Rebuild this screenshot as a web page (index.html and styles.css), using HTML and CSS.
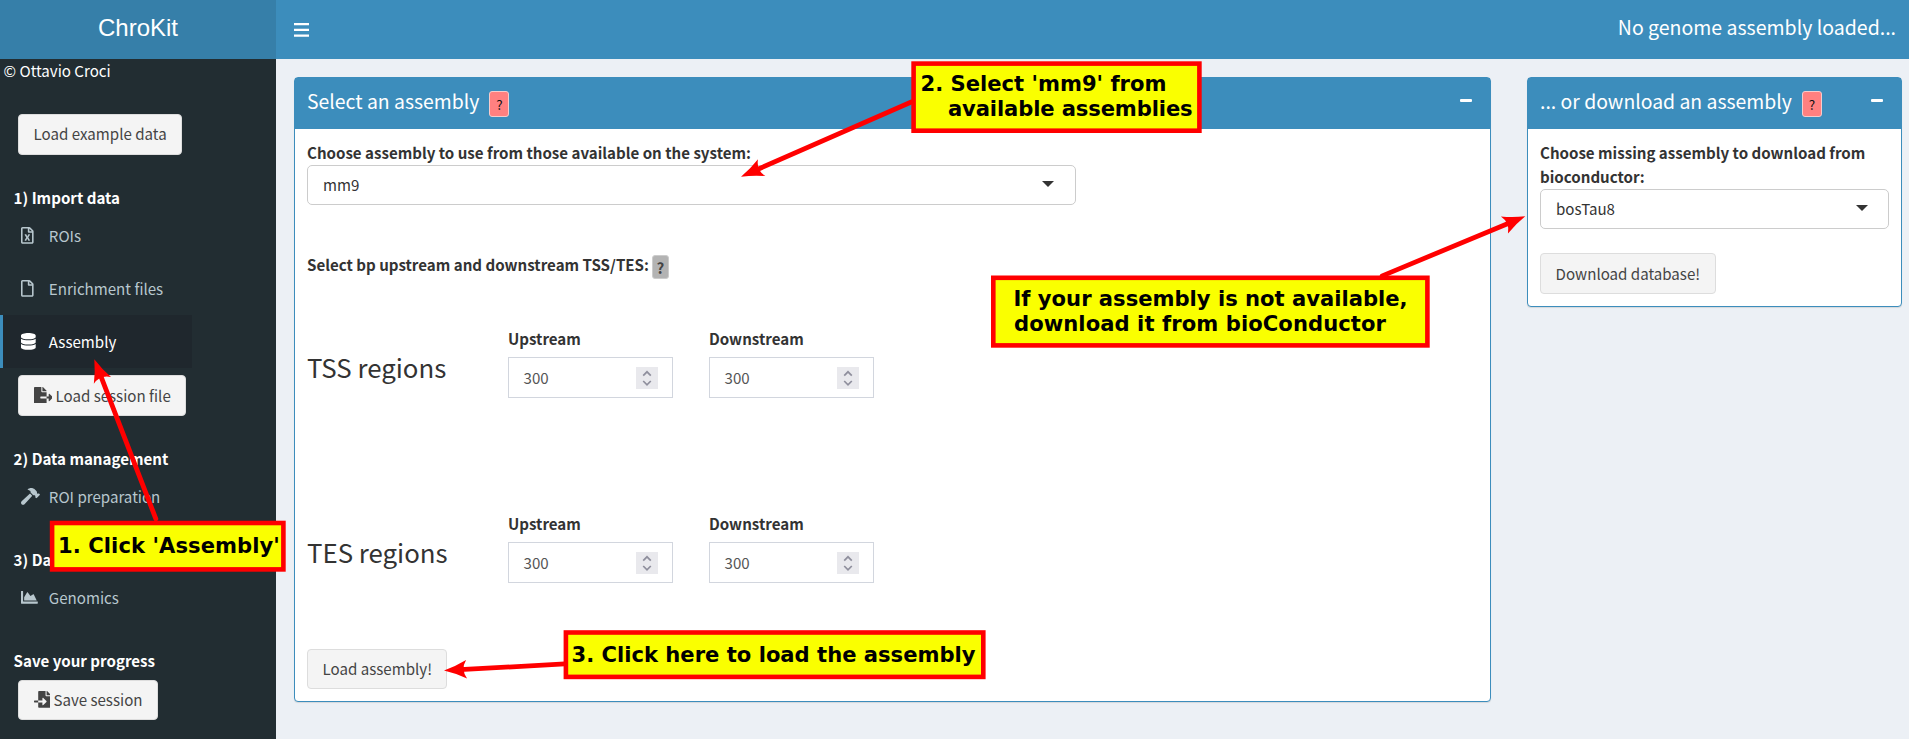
FILE: index.html
```html
<!DOCTYPE html>
<html lang="en">
<head>
<meta charset="utf-8">
<title>ChroKit</title>
<link rel="stylesheet" href="styles.css">
</head>
<body>
<div class="app">
  <header class="topbar">
    <div class="logo">ChroKit</div>
    <nav class="navbar">
      <svg class="burger" viewBox="0 0 15 14"><path d="M0 1.1h15M0 6.9h15M0 12.7h15"/></svg>
      <div class="status">No genome assembly loaded...</div>
    </nav>
  </header>
  <div class="main">
    <aside class="sidebar">
      <div class="copyright">© Ottavio Croci</div>
      <button class="btn example">Load example data</button>
      <h4 class="section first">1) Import data</h4>
      <a class="item"><span class="ico"><svg width="12.6" height="16.8" viewBox="0 0 384 512"><path d="M369.9 97.9L286 14C277 5 264.8-.1 252.1-.1H48C21.500 0 0 21.500 0 48v416c0 26.500 21.500 48 48 48h288c26.500 0 48-21.500 48-48V131.900c0-12.700-5.100-25-14.100-34zM332.100 128H256V51.900l76.100 76.100zM48 464V48h160v104c0 13.300 10.700 24 24 24h104v288H48zm212-240h-28.800c-4.400 0-8.400 2.400-10.500 6.300-18 33.100-22.200 42.400-28.600 57.700-13.900-29.100-6.900-17.300-28.600-57.700-2.100-3.900-6.200-6.300-10.600-6.300H124c-9.300 0-15 10-10.400 18l46.300 78-46.300 78c-4.700 8 1.100 18 10.400 18h28.900c4.400 0 8.400-2.400 10.500-6.300 21.700-40 23-45 28.600-57.700 14.900 30.200 5.900 15.900 28.600 57.700 2.100 3.900 6.200 6.300 10.600 6.300H260c9.300 0 15-10 10.400-18L224 320c.7-1.100 30.300-50.500 46.300-78 4.700-8-1.100-18-10.300-18z"/></svg></span>ROIs</a>
      <a class="item"><span class="ico"><svg width="12.6" height="16.8" viewBox="0 0 384 512"><path d="M369.900 97.900L286 14C277 5 264.800-.1 252.100-.1H48C21.500 0 0 21.500 0 48v416c0 26.500 21.500 48 48 48h288c26.500 0 48-21.500 48-48V131.900c0-12.700-5.100-25-14.100-34zM332.100 128H256V51.900l76.100 76.100zM48 464V48h160v104c0 13.300 10.700 24 24 24h104v288H48z"/></svg></span>Enrichment files</a>
      <a class="item active"><span class="ico"><svg width="14.7" height="16.8" viewBox="0 0 448 512"><path d="M448 73.143v45.714C448 159.143 347.667 192 224 192S0 159.143 0 118.857V73.143C0 32.857 100.333 0 224 0s224 32.857 224 73.143zM448 176v102.857C448 319.143 347.667 352 224 352S0 319.143 0 278.857V176c48.125 33.143 136.208 48.572 224 48.572S399.874 209.143 448 176zm0 160v102.857C448 479.143 347.667 512 224 512S0 479.143 0 438.857V336c48.125 33.143 136.208 48.572 224 48.572S399.874 369.143 448 336z"/></svg></span>Assembly</a>
      <button class="btn load-session"><svg width="18.9" height="16.8" viewBox="0 0 576 512"><path d="M384 121.900c0-6.300-2.500-12.400-7-16.900L279.100 7c-4.500-4.500-10.600-7-17-7H256v128h128v-6.100zM571 308l-95.700-96.400c-10.100-10.100-27.400-3-27.400 11.300V288h-64v64h64v65.200c0 14.300 17.300 21.400 27.400 11.300L571 332c6.600-6.600 6.600-17.400 0-24zm-379 28v-32c0-8.800 7.200-16 16-16h176V160H248c-13.200 0-24-10.800-24-24V0H24C10.700 0 0 10.700 0 24v464c0 13.300 10.700 24 24 24h336c13.300 0 24-10.700 24-24V352H208c-8.800 0-16-7.200-16-16z"/></svg>Load session file</button>
      <h4 class="section first">2) Data management</h4>
      <a class="item"><span class="ico"><svg width="18.9" height="16.8" viewBox="0 0 576 512"><path d="M571.310 193.940l-22.630-22.630c-6.250-6.250-16.380-6.250-22.630 0l-11.310 11.310-28.900-28.900c5.630-21.310.36-44.900-16.350-61.610l-45.250-45.250c-62.480-62.480-163.790-62.480-226.280 0l90.510 45.250v18.750c0 16.970 6.740 33.250 18.750 45.250l49.140 49.140c16.710 16.710 40.300 21.980 61.610 16.350l28.900 28.900-11.310 11.310c-6.250 6.250-6.250 16.380 0 22.630l22.630 22.630c6.250 6.250 16.380 6.250 22.630 0l90.510-90.510c6.230-6.240 6.230-16.370-.02-22.620zm-286.720-15.200c-3.700-3.700-6.840-7.790-9.850-11.950L19.640 404.960c-25.570 23.880-26.260 64.190-1.530 88.930s65.050 24.050 88.920-1.530l238.130-255.070c-3.960-2.910-7.900-5.870-11.440-9.410l-49.130-49.140z"/></svg></span>ROI preparation</a>
      <h4 class="section">3) Da</h4>
      <a class="item"><span class="ico"><svg width="16.8" height="16.8" viewBox="0 0 512 512"><path d="M500 384c6.600 0 12 5.400 12 12v40c0 6.600-5.400 12-12 12H12c-6.600 0-12-5.400-12-12V76c0-6.600 5.400-12 12-12h40c6.600 0 12 5.400 12 12v308h436zM372.700 159.500L288 216l-85.300-113.700c-5.100-6.800-15.500-6.300-19.900 1L96 248v104h384l-89.900-187.800c-3.200-6.500-11.400-8.700-17.400-4.700z"/></svg></span>Genomics</a>
      <h4 class="section">Save your progress</h4>
      <button class="btn save-session"><svg width="16.8" height="16.8" viewBox="0 0 512 512"><path d="M16 288c-8.800 0-16 7.200-16 16v32c0 8.800 7.200 16 16 16h112v-64H16zm489-183L407.100 7c-4.500-4.500-10.600-7-17-7H384v128h128v-6.100c0-6.300-2.500-12.400-7-16.900zm-153 31V0H152c-13.300 0-24 10.700-24 24v264h128v-65.200c0-14.300 17.300-21.400 27.400-11.300L379 308c6.600 6.700 6.600 17.400 0 24l-95.700 96.400c-10.100 10.100-27.400 3-27.400-11.300V352H128v136c0 13.300 10.700 24 24 24h336c13.300 0 24-10.700 24-24V160H376c-13.200 0-24-10.800-24-24z"/></svg>Save session</button>
    </aside>

    <main class="content">
      <section class="box box-select">
        <header class="box-head"><h3>Select an assembly</h3><span class="help">?</span><span class="collapse"></span></header>
        <div class="box-body">
          <label>Choose assembly to use from those available on the system:</label>
          <div class="select wide">mm9<i class="caret"></i></div>
          <div class="subhead"><label>Select bp upstream and downstream TSS/TES:</label><span class="help grey">?</span></div>
          <div class="region">
            <div class="region-name">TSS regions</div>
            <div class="field"><label>Upstream</label><div class="number">300<svg viewBox="0 0 22 22"><path d="M7.200 8.600L11 4.800l3.800 3.800M7.200 14L11 17.800l3.800-3.800"/></svg></div></div>
            <div class="field"><label>Downstream</label><div class="number">300<svg viewBox="0 0 22 22"><path d="M7.200 8.600L11 4.800l3.800 3.800M7.200 14L11 17.800l3.800-3.800"/></svg></div></div>
          </div>
          <div class="region">
            <div class="region-name">TES regions</div>
            <div class="field"><label>Upstream</label><div class="number">300<svg viewBox="0 0 22 22"><path d="M7.200 8.600L11 4.800l3.800 3.800M7.200 14L11 17.800l3.800-3.800"/></svg></div></div>
            <div class="field"><label>Downstream</label><div class="number">300<svg viewBox="0 0 22 22"><path d="M7.200 8.600L11 4.800l3.800 3.800M7.200 14L11 17.800l3.800-3.800"/></svg></div></div>
          </div>
          <button class="btn load-assembly">Load assembly!</button>
        </div>
      </section>

      <section class="box box-download">
        <header class="box-head"><h3>... or download an assembly</h3><span class="help">?</span><span class="collapse"></span></header>
        <div class="box-body">
          <label class="multi">Choose missing assembly to download from bioconductor:</label>
          <div class="select">bosTau8<i class="caret"></i></div>
          <button class="btn download">Download database!</button>
        </div>
      </section>
    </main>
  </div>

  <svg class="annotations" width="1909" height="739" viewBox="0 0 1909 739">
    <defs>
      <g id="head"><path d="M0 0Q12 -3.500 22.600 -9.200Q16.500 0 22.600 9.200Q12 3.500 0 0Z"/></g>
    </defs>
    <g class="arrow" transform="translate(94.300 359.300) rotate(68.900)"><use href="#head"/><path class="shaft" d="M16 0H171"/></g>
    <g class="arrow" transform="translate(741 176.700) rotate(-23.700)"><use href="#head"/><path class="shaft" d="M16 0H186"/></g>
    <g class="arrow" transform="translate(444 670.500) rotate(-3.100)"><use href="#head"/><path class="shaft" d="M16 0H121"/></g>
    <g class="arrow" transform="translate(1525.300 216.300) rotate(157.400)"><use href="#head"/><path class="shaft" d="M16 0H155"/></g>
    <rect class="note" x="52.100" y="523" width="231.300" height="46.400"/>
    <rect class="note" x="913.600" y="63.600" width="285.800" height="67.100"/>
    <rect class="note" x="565.900" y="632.500" width="417.400" height="44.400"/>
    <rect class="note" x="993.300" y="277.800" width="434.100" height="67.600"/>
    <text class="loose" x="58" y="553">1. Click 'Assembly'</text>
    <text x="920.500" y="91">2. Select 'mm9' from</text>
    <text class="tight" x="948" y="116">available assemblies</text>
    <text x="571.500" y="662">3. Click here to load the assembly</text>
    <text x="1013.500" y="306">If your assembly is not available,</text>
    <text class="loose" x="1014" y="331">download it from bioConductor</text>
  </svg>
</div>
</body>
</html>
```
FILE: styles.css
```css
* { box-sizing: border-box; }

body {
  margin: 0;
  font: 15.1px/23px "Noto Sans CJK SC", "Noto Sans", sans-serif;
  color: #333;
  background: #ecf0f5;
}

.app {
  position: relative;
  width: 1909px;
  height: 739px;
  overflow: hidden;
  display: flex;
  flex-direction: column;
}

h3, h4 { margin: 0; }
label { display: block; font-weight: 700; white-space: nowrap; }

/* Top bar */
.topbar { display: flex; height: 59px; flex: none; color: #fff; }
.logo {
  width: 276px;
  background: #367fa9;
  text-align: center;
  font: 24px/55px "Liberation Sans", Arial, sans-serif;
}
.navbar {
  flex: 1;
  display: flex;
  justify-content: space-between;
  align-items: flex-start;
  background: #3c8dbc;
  padding: 0 13px 0 18px;
}
.burger { width: 15px; height: 14px; margin-top: 22.500px; stroke: #fff; stroke-width: 2.200; fill: none; }
.status { font-size: 19.500px; line-height: 53px; }

.main { flex: 1; display: flex; min-height: 0; }

/* Sidebar */
.sidebar {
  width: 276px;
  background: #222d32;
  display: flex;
  flex-direction: column;
  align-items: flex-start;
}
.copyright { color: #fff; padding-left: 3.500px; }
.section { color: #fff; font-size: 15.100px; margin-top: 25px; padding-left: 13.600px; white-space: nowrap; }
.section.first { margin-top: 31px; }
.item {
  display: flex;
  align-items: center;
  width: 192px;
  height: 53px;
  border-left: 3px solid transparent;
  padding-left: 18px;
  color: #b8c7ce;
}
.item.active { background: #1f272d; border-left-color: #3c8dbc; color: #fff; }
.ico { width: 27.800px; display: flex; }
.item svg, .btn svg { fill: currentColor; display: block; flex: none; }

.btn {
  display: flex;
  align-items: center;
  height: 41px;
  padding: 0 0 1px 14.600px;
  font: inherit;
  white-space: nowrap;
  color: #444;
  background: #f4f4f4;
  border: 1px solid #ddd;
  border-radius: 4px;
}
.sidebar .btn { margin-left: 18px; }
.example { width: 164px; margin-top: 32px; padding-bottom: 3px; }
.load-session { width: 168px; margin-top: 7px; gap: 3px; }
.save-session { width: 140px; height: 40px; margin-top: 8px; gap: 3px; }

/* Boxes */
.content { flex: 1; display: flex; align-items: flex-start; gap: 36px; padding: 18px 7px 0 18px; }
.box {
  background: #fff;
  border: 1px solid #3c8dbc;
  border-radius: 4px;
  box-shadow: 0 1px 1px rgba(0, 0, 0, .1);
}
.box-select { width: 1197px; height: 625px; }
.box-download { width: 375px; height: 230px; }
.box-head {
  display: flex;
  height: 51px;
  align-items: flex-start;
  background: #3c8dbc;
  color: #fff;
  padding: 0 18px 0 12px;
}
.box-head h3 { font-weight: 400; font-size: 19.400px; line-height: 45px; white-space: nowrap; }
.help {
  width: 20px;
  height: 26px;
  margin: 13px 0 0 10px;
  border: 1px solid #f5cccc;
  border-radius: 3px;
  background: #ff8080;
  color: #111;
  font-size: 13.500px;
  line-height: 24px;
  text-align: center;
}
.help.grey {
  width: 17px;
  height: 24px;
  margin: 2px 0 0 3px;
  background: #b3b3b3;
  border-color: #ccc;
  color: #444;
  font-size: 15.100px;
  font-weight: 700;
  line-height: 23px;
}
.collapse { width: 12.500px; height: 3px; background: #fff; border-radius: 1px; margin: 21px 0 0 auto; }
.box-body { padding: 12px; display: flex; flex-direction: column; align-items: flex-start; }

.select {
  display: flex;
  align-items: center;
  justify-content: space-between;
  width: 349px;
  height: 40px;
  margin-top: 1px;
  padding: 0 20px 1px 15px;
  border: 1px solid #ccc;
  border-radius: 5px;
}
.select.wide { width: 769px; padding-right: 21px; }
.caret { border: 6px solid transparent; border-top-color: #333; border-bottom: 0; margin-top: -2px; }
.subhead { display: flex; margin-top: 48px; height: 26px; }

.region { display: grid; grid-template-columns: 201px 201px 165px; height: 71px; margin-top: 114px; }
.subhead + .region { margin-top: 48px; }
.region-name { font-size: 25.800px; line-height: 30px; padding-top: 25px; }
.number {
  display: flex;
  align-items: center;
  justify-content: space-between;
  width: 165px;
  height: 41px;
  margin-top: 7px;
  padding: 0 14px 0 14.500px;
  border: 1px solid #d2d6de;
  color: #555;
}
.number svg { width: 22px; height: 22px; background: #e9e9ed; fill: none; stroke: #8f8f9d; stroke-width: 1.700; }
.load-assembly { width: 140px; height: 40px; margin-top: 66px; }
.multi { white-space: normal; line-height: 24px; margin-top: -1px; }
.multi + .select { margin-top: 1px; }
.download { width: 176px; margin-top: 24px; }

/* Tutorial notes drawn over the interface */
.annotations { position: absolute; left: 0; top: 0; }
.arrow { fill: #f00; }
.shaft { stroke: #f00; stroke-width: 4.800; stroke-linecap: round; }
.note { fill: #faff00; stroke: #f00; stroke-width: 4.600; }
.annotations text { font: bold 21.100px "DejaVu Sans", sans-serif; fill: #000; }
.annotations .loose { letter-spacing: .07px; }
.annotations .tight { letter-spacing: -.12px; }
```
